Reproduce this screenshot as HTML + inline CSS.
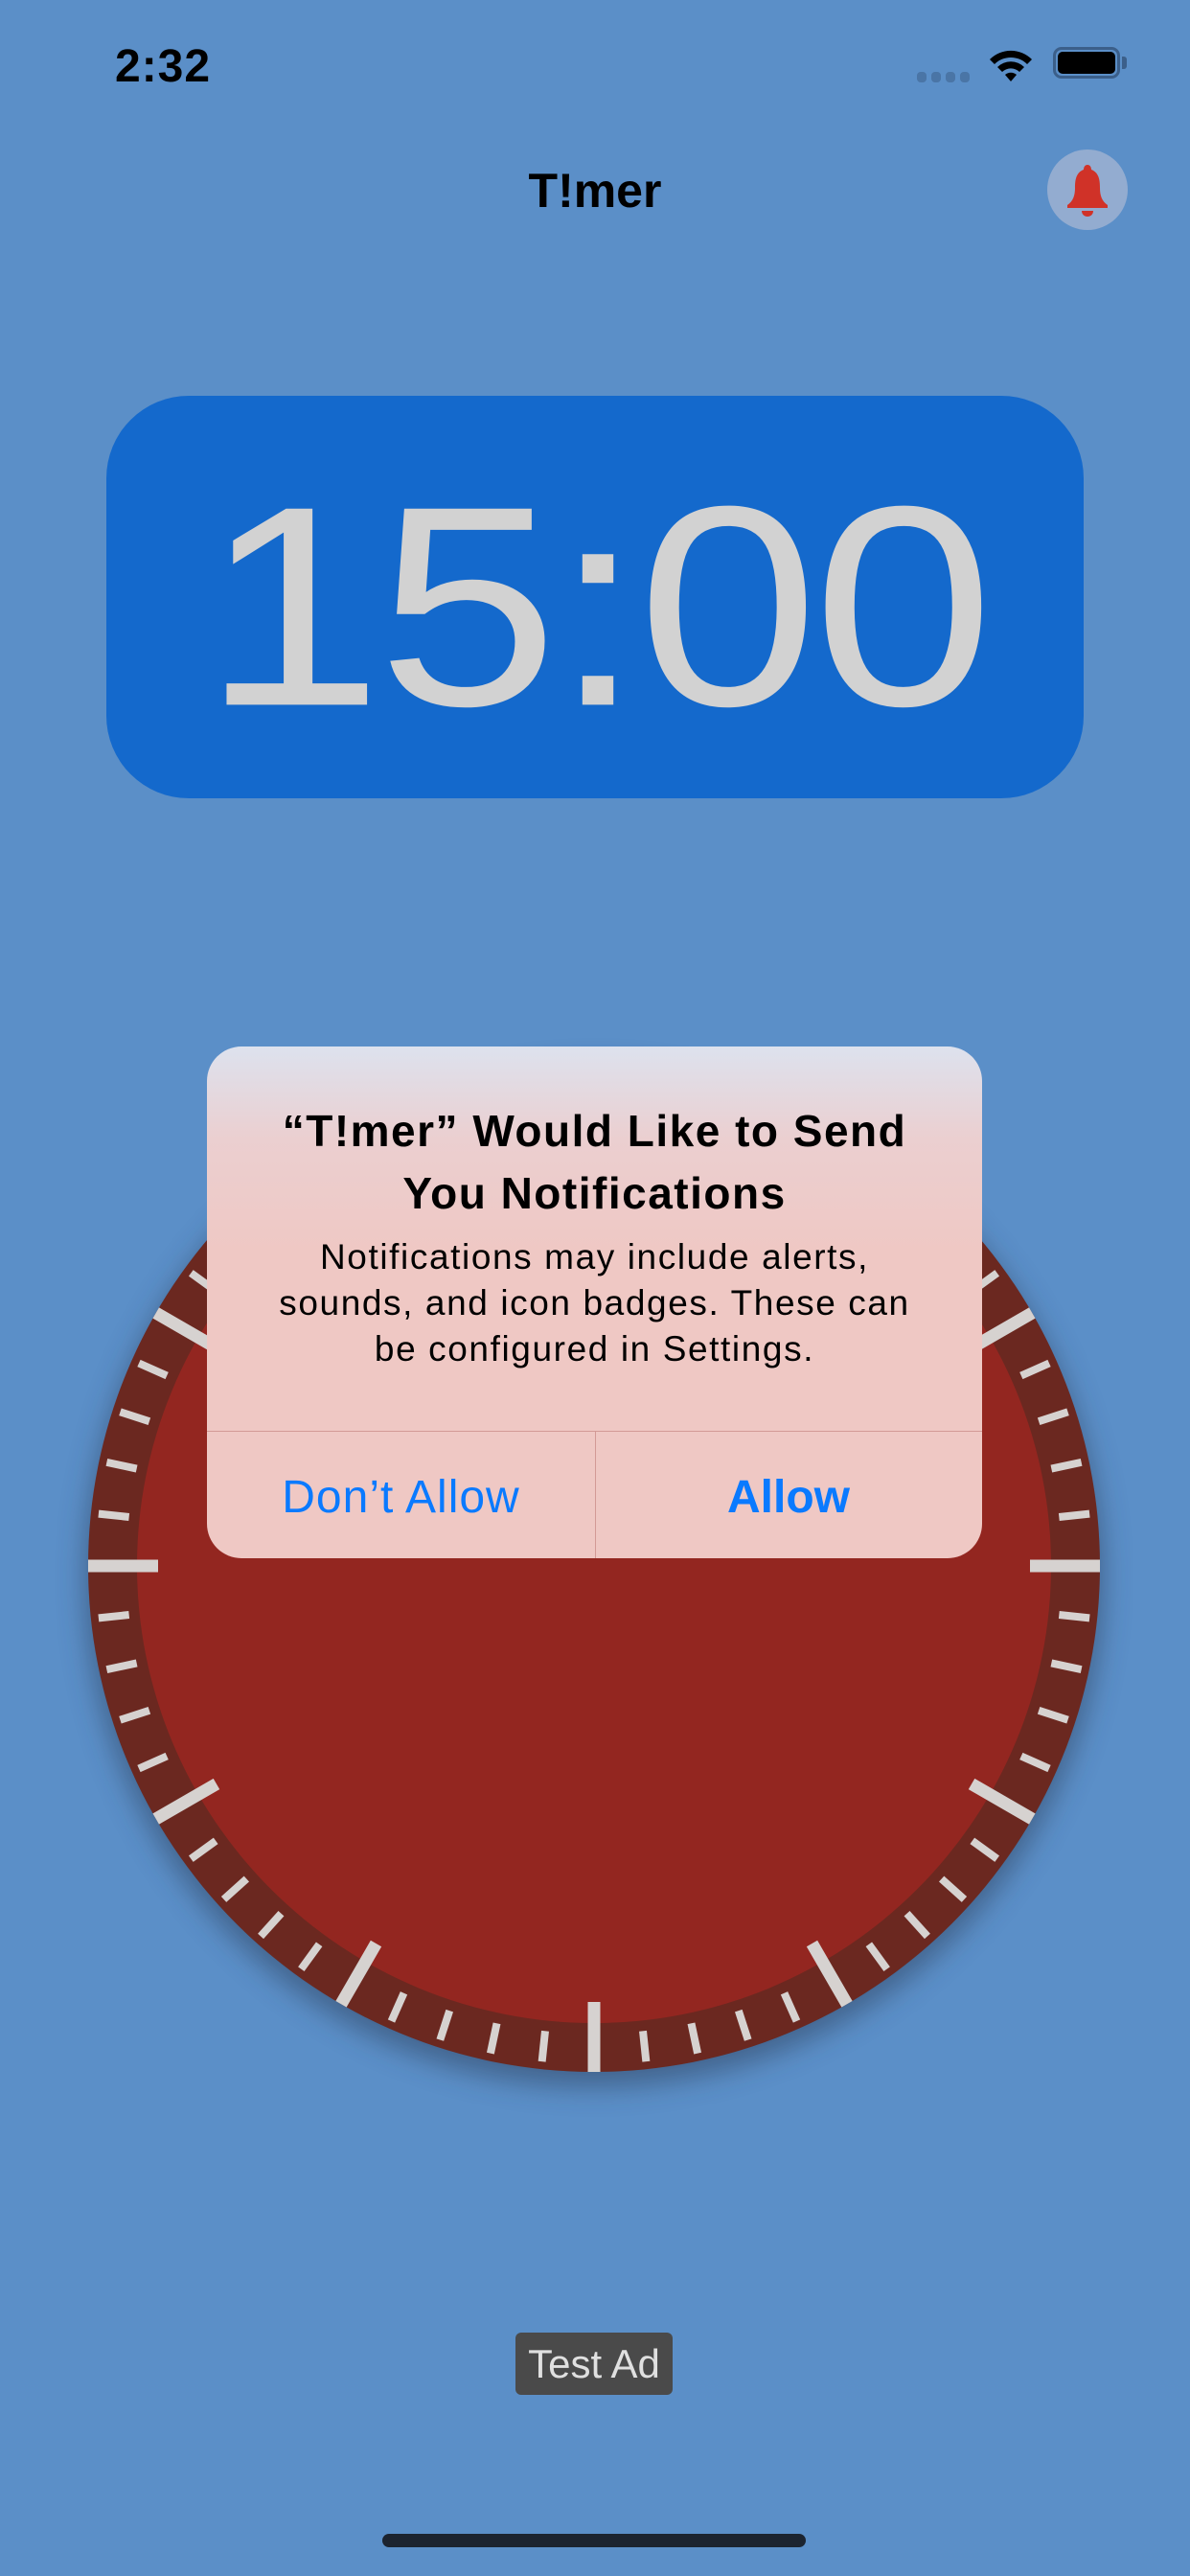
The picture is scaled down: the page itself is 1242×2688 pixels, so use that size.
<!DOCTYPE html>
<html><head><meta charset="utf-8"><style>
html,body{margin:0;padding:0}
body{width:1242px;height:2688px;background:#5b8fc8;position:relative;overflow:hidden;font-family:"Liberation Sans",sans-serif}
.abs{position:absolute}
</style></head><body>
<div class="abs" style="left:120px;top:42px;font-size:48px;font-weight:bold;color:#000;letter-spacing:1px">2:32</div>
<div class="abs" style="left:957px;top:75px;width:55px;height:11px">
<div class="abs" style="left:0;width:10px;height:11px;border-radius:4px;background:#4a75a6"></div>
<div class="abs" style="left:15px;width:10px;height:11px;border-radius:4px;background:#4a75a6"></div>
<div class="abs" style="left:30px;width:10px;height:11px;border-radius:4px;background:#4a75a6"></div>
<div class="abs" style="left:45px;width:10px;height:11px;border-radius:4px;background:#4a75a6"></div>
</div>
<svg class="abs" style="left:1030px;top:48px" width="50" height="40" viewBox="0 0 50 40">
<path d="M3 14 A31 31 0 0 1 47 14 L42 19 A24 24 0 0 0 8 19Z" fill="#000"/>
<path d="M11 22 A20 20 0 0 1 39 22 L34 27 A13 13 0 0 0 16 27Z" fill="#000"/>
<path d="M19 30 A9 9 0 0 1 31 30 L25 37Z" fill="#000"/>
</svg>
<div class="abs" style="left:1099px;top:49px;width:70px;height:33px;border:3px solid #3b5f8a;border-radius:9px;box-sizing:border-box"></div>
<div class="abs" style="left:1104px;top:54px;width:60px;height:23px;background:#000;border-radius:5px"></div>
<div class="abs" style="left:1171px;top:59px;width:5px;height:13px;background:#3b5f8a;border-radius:0 3px 3px 0"></div>
<div class="abs" style="left:0;width:1242px;top:170px;text-align:center;font-size:50px;font-weight:bold;color:#000">T!mer</div>
<div class="abs" style="left:1093px;top:156px;width:84px;height:84px;border-radius:50%;background:#93acd0"></div>
<svg class="abs" style="left:1110px;top:170px" width="50" height="56" viewBox="0 0 50 56">
<path d="M25 2 C22 2 21 5 21 7 C13 10 12 18 12 26 C12 34 10 40 4 44 L4 47 L46 47 L46 44 C40 40 38 34 38 26 C38 18 37 10 29 7 C29 5 28 2 25 2Z" fill="#d03228"/>
<path d="M19 50 L31 50 C31 54 28 56 25 56 C22 56 19 54 19 50Z" fill="#d03228"/>
</svg>
<div class="abs" style="left:111px;top:413px;width:1020px;height:420px;background:#1469cc;border-radius:86px"></div>
<div class="abs" style="left:111px;top:453px;width:1020px;text-align:center;font-size:340px;line-height:360px;color:#d2d2d2;font-weight:normal;letter-spacing:-6px;transform:scaleY(0.875);transform-origin:50% 50%">15:00</div>
<svg class="abs" style="left:0;top:0" width="1242" height="2688">
<defs><filter id="sh" x="-20%" y="-20%" width="140%" height="140%"><feGaussianBlur stdDeviation="14"/></filter></defs>
<circle cx="620" cy="1646" r="532" fill="#2a3a55" opacity="0.5" filter="url(#sh)"/>
<circle cx="620" cy="1634" r="528" fill="#6b2820"/>
<circle cx="620" cy="1634" r="477" fill="#932620"/>
<g id="ticks" stroke="#d6d2d0" stroke-linecap="butt"></g>
</svg>
<script>
var g=document.getElementById('ticks'),s='';
for(var i=0;i<60;i++){var a=i*Math.PI/30,maj=i%5==0,r1=maj?455:488,r2=maj?528:520,c=Math.cos(a),n=Math.sin(a);
s+='<line x1="'+(620+r1*c)+'" y1="'+(1634+r1*n)+'" x2="'+(620+r2*c)+'" y2="'+(1634+r2*n)+'" stroke-width="'+(maj?13:8)+'"/>';}
g.innerHTML=s;
</script>
<div class="abs" style="left:216px;top:1092px;width:809px;height:534px;border-radius:36px;background:linear-gradient(180deg,#dde2ee 0%,#ebcfd0 18%,#efc8c4 40%,#efc8c4 100%);overflow:hidden">
<div class="abs" style="left:0;width:809px;top:56px;text-align:center;font-size:46px;font-weight:bold;line-height:65px;color:#000;letter-spacing:1.5px">“T!mer” Would Like to Send<br>You Notifications</div>
<div class="abs" style="left:0;width:809px;top:196px;text-align:center;font-size:37px;line-height:48px;color:#000;letter-spacing:1.6px">Notifications may include alerts,<br>sounds, and icon badges. These can<br>be configured in Settings.</div>
<div class="abs" style="left:0;width:809px;top:401px;height:1px;background:#d39a96"></div>
<div class="abs" style="left:405px;width:1px;top:401px;height:133px;background:#d39a96"></div>
<div class="abs" style="left:0;width:405px;top:443px;text-align:center;font-size:48px;color:#0a7aff;letter-spacing:1px">Don’t Allow</div>
<div class="abs" style="left:405px;width:404px;top:443px;text-align:center;font-size:48px;font-weight:bold;color:#0a7aff">Allow</div>
</div>
<div class="abs" style="left:538px;top:2434px;width:164px;height:65px;background:#4a4a4a;border-radius:6px;color:#e0e0e0;font-size:42px;line-height:65px;text-align:center">Test Ad</div>
<div class="abs" style="left:399px;top:2644px;width:442px;height:14px;border-radius:7px;background:#1c2430"></div>
</body></html>
